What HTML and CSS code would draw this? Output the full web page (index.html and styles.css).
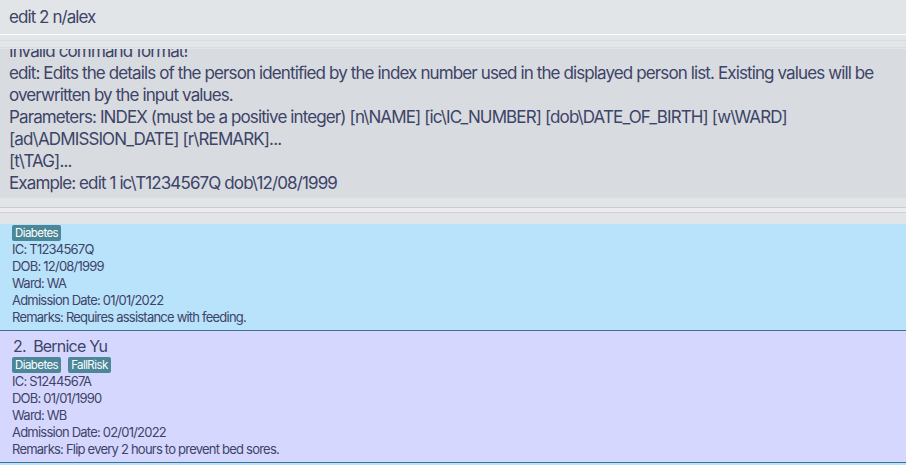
FILE: index.html
```html
<!DOCTYPE html>
<html>
<head>
<meta charset="utf-8">
<link rel="stylesheet" href="styles.css">
</head>
<body>
<div class="app">
  <div class="command">edit 2 n/alex</div>
  <div class="gap-top"></div>
  <div class="result">
    <div class="result-text">Invalid command format!<br>edit: Edits the details of the person identified by the index number used in the displayed person list. Existing values will be overwritten by the input values.<br>Parameters: INDEX (must be a positive integer) [n\NAME] [ic\IC_NUMBER] [dob\DATE_OF_BIRTH] [w\WARD]<br>[ad\ADMISSION_DATE] [r\REMARK]...<br>[t\TAG]...<br>Example: edit 1 ic\T1234567Q dob\12/08/1999</div>
  </div>
  <div class="gap-mid"></div>
  <div class="divider"></div>
  <div class="gap-list"></div>
  <div class="list">
    <div class="list-inner">
      <div class="card card-blue">
        <div class="name">1.&nbsp; Alex Yeoh</div>
        <div class="tags"><span class="tag">Diabetes</span></div>
        <div class="line">IC: T1234567Q</div>
        <div class="line">DOB: 12/08/1999</div>
        <div class="line">Ward: WA</div>
        <div class="line">Admission Date: 01/01/2022</div>
        <div class="line">Remarks: Requires assistance with feeding.</div>
      </div>
      <div class="card card-purple">
        <div class="name">2.&nbsp; Bernice Yu</div>
        <div class="tags"><span class="tag">Diabetes</span><span class="tag">FallRisk</span></div>
        <div class="line">IC: S1244567A</div>
        <div class="line">DOB: 01/01/1990</div>
        <div class="line">Ward: WB</div>
        <div class="line">Admission Date: 02/01/2022</div>
        <div class="line">Remarks: Flip every 2 hours to prevent bed sores.</div>
      </div>
      <div class="card card-blue">
        <div class="name">3.&nbsp; Charlotte Oliveiro</div>
      </div>
    </div>
  </div>
</div>
</body>
</html>
```
FILE: styles.css
```css
html, body {
  margin: 0;
  padding: 0;
  width: 906px;
  height: 465px;
  overflow: hidden;
  background: #e1e5e8;
}
.app {
  display: flex;
  flex-direction: column;
  height: 465px;
  font-family: Inter, "Noto Sans", sans-serif;
  color: #3d4467;
}
.command {
  box-sizing: border-box;
  height: 35px;
  padding: 6px 9px 0;
  font-size: 17px;
  line-height: 22px;
  letter-spacing: -0.055em;
  background: #e1e5e8;
  border-bottom: 1px solid #ffffff;
}
.gap-top {
  height: 14px;
  background: #e2e6e8;
  background-image: linear-gradient(to bottom, transparent 5px, #d8dcdf 5px, #d8dcdf 6px, transparent 6px, transparent 12px, #d8dcdf 12px, #d8dcdf 13px, transparent 13px);
}
.result {
  height: 149px;
  overflow: hidden;
  background: #d8dbe0;
}
.result-text {
  margin-top: -9px;
  padding: 0 9px;
  font-size: 17px;
  line-height: 22px;
  letter-spacing: -0.052em;
}
.gap-mid {
  height: 9px;
  background: #e1e5e8;
}
.divider {
  height: 4px;
  background: #ececee;
  border-top: 1px solid #c9cbce;
  border-bottom: 1px solid #d0d2d4;
}
.gap-list {
  height: 11px;
  background: #e1e5e8;
}
.list {
  flex: 1;
  overflow: hidden;
}
.list-inner {
  margin-top: -25px;
}
.card {
  padding: 5px 12px 4px;
  border-bottom: 1px solid #3f7190;
}
.card-blue { background: #b9e2fb; }
.card-purple { background: #d6d7fe; }
.name {
  font-size: 16px;
  line-height: 20px;
  padding-left: 1px;
  letter-spacing: -0.05em;
}
.tags {
  display: flex;
  gap: 7px;
  padding-top: 1px;
}
.tag {
  background: #4b8798;
  color: #ffffff;
  font-size: 11.5px;
  line-height: 16px;
  padding: 0 3px;
  border-radius: 2px;
  letter-spacing: -0.05em;
}
.line {
  font-size: 13px;
  line-height: 17px;
  letter-spacing: -0.06em;
}
```
